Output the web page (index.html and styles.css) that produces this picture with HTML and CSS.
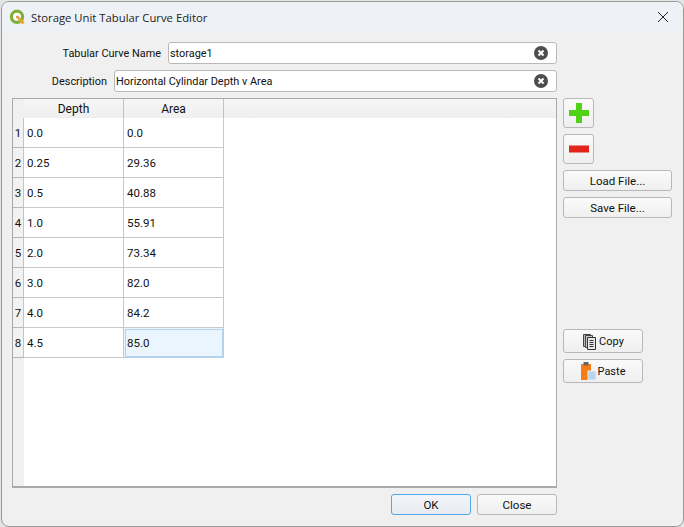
FILE: index.html
```html
<!DOCTYPE html>
<html lang="en">
<head>
  <meta charset="UTF-8">
  <title>Storage Unit Tabular Curve Editor</title>
  <link rel="stylesheet" href="styles.css">
</head>
<body>
  <div class="window">
    <div class="titlebar">
      <svg class="app-icon" width="17" height="17" viewBox="0 0 17 17">
        <circle cx="8" cy="7.800" r="5.600" fill="#fff" stroke="#7fae3c" stroke-width="3.200"/>
        <circle cx="8.500" cy="8" r="1.500" fill="#ec8a3c"/>
        <path d="M9.500 9l5 5.500" stroke="#e9a62c" stroke-width="3"/>
      </svg>
      <span class="title">Storage Unit Tabular Curve Editor</span>
      <svg class="close-x" width="12" height="12" viewBox="0 0 12 12">
        <path d="M1 1l10 10M11 1L1 11" stroke="#222" stroke-width="1" fill="none"/>
      </svg>
    </div>
    <div class="content">
      <div class="main">
        <div class="form-row name-row">
          <label>Tabular Curve Name</label>
          <div class="field"><span>storage1</span>
            <svg class="clear" width="14" height="14" viewBox="0 0 14 14"><circle cx="7" cy="7" r="7" fill="#4d4d4d"/><path d="M4.500 4.500l5 5M9.500 4.500l-5 5" stroke="#fff" stroke-width="2"/></svg>
          </div>
        </div>
        <div class="form-row desc-row">
          <label>Description</label>
          <div class="field"><span>Horizontal Cylindar Depth v Area</span>
            <svg class="clear" width="14" height="14" viewBox="0 0 14 14"><circle cx="7" cy="7" r="7" fill="#4d4d4d"/><path d="M4.500 4.500l5 5M9.500 4.500l-5 5" stroke="#fff" stroke-width="2"/></svg>
          </div>
        </div>
        <div class="table-box">
          <div class="row-heads">
            <div class="corner"></div>
            <div class="row-head">1</div>
            <div class="row-head">2</div>
            <div class="row-head">3</div>
            <div class="row-head">4</div>
            <div class="row-head">5</div>
            <div class="row-head">6</div>
            <div class="row-head">7</div>
            <div class="row-head">8</div>
          </div>
          <div class="table-body">
            <div class="col-heads">
              <div class="col-head">Depth</div>
              <div class="col-head">Area</div>
            </div>
            <div class="cells">
              <div class="cell">0.0</div><div class="cell">0.0</div>
              <div class="cell">0.25</div><div class="cell">29.36</div>
              <div class="cell">0.5</div><div class="cell">40.88</div>
              <div class="cell">1.0</div><div class="cell">55.91</div>
              <div class="cell">2.0</div><div class="cell">73.34</div>
              <div class="cell">3.0</div><div class="cell">82.0</div>
              <div class="cell">4.0</div><div class="cell">84.2</div>
              <div class="cell">4.5</div><div class="cell selected">85.0</div>
            </div>
          </div>
        </div>
        <div class="footer">
          <button class="btn dlg default">OK</button>
          <button class="btn dlg">Close</button>
        </div>
      </div>
      <div class="side">
        <button class="btn square">
          <svg width="20" height="20" viewBox="0 0 20 20"><path d="M7 0h6v7h7v6h-7v7H7v-7H0V7h7z" fill="#4fd314"/></svg>
        </button>
        <button class="btn square">
          <svg width="20" height="8" viewBox="0 0 20 8"><rect width="20" height="7" y="0.500" fill="#e3241c"/></svg>
        </button>
        <button class="btn wide">Load File...</button>
        <button class="btn wide">Save File...</button>
        <div class="spacer"></div>
        <button class="btn small">
          <svg width="16" height="17" viewBox="0 0 16 17"><path d="M1.500 1.500h7v12h-7z" fill="#bbb" stroke="#444"/><path d="M3.500 2.500h7v12h-7z" fill="#ccc" stroke="#444"/><path d="M5.500 4.500h8v12h-8z" fill="#e8e8e8" stroke="#333"/><path d="M7.500 7.500h4M7.500 9.500h4M7.500 11.500h4M7.500 13.500h4" stroke="#333"/></svg>
          Copy
        </button>
        <button class="btn small">
          <svg width="16" height="19" viewBox="0 0 16 19"><rect x="0" y="2" width="10" height="16" fill="#f47d16"/><rect x="2.500" y="0" width="5" height="3.500" fill="#666"/><rect x="7" y="9" width="8" height="9" fill="#bcd4ea" stroke="#e6eef6"/></svg>
          Paste
        </button>
      </div>
    </div>
  </div>
</body>
</html>
```

FILE: styles.css
```css
* {
  box-sizing: border-box;
}

body {
  margin: 0;
  width: 684px;
  height: 527px;
  overflow: hidden;
  background-color: #e4e4e4;
  font-family: 'Roboto', sans-serif;
  font-size: 11.5px;
  color: #111;
}

.window {
  width: 683px;
  height: 526px;
  margin-left: 1px;
  margin-top: 1px;
  border-radius: 8px;
  border: 1px solid #9a9a9a;
  overflow: hidden;
  display: flex;
  flex-direction: column;
  background-color: #f0f0f0;
}

.titlebar {
  height: 30px;
  flex: none;
  display: flex;
  align-items: center;
  padding: 0 14px 0 7px;
  background-color: #eef2f7;
}

.app-icon {
  margin-right: 5px;
}

.title {
  flex: 1;
  font-family: 'Open Sans', sans-serif;
  font-size: 11.3px;
  color: #222;
}

.content {
  flex: 1;
  display: flex;
  padding: 10px 10px 11px 10px;
  gap: 6px;
}

.main {
  width: 545px;
  display: flex;
  flex-direction: column;
}

.form-row {
  height: 22px;
  display: flex;
  align-items: center;
  margin-bottom: 6px;
  font-size: 10.9px;
}

.form-row label {
  text-align: right;
  margin-right: 7px;
}

.name-row label {
  width: 149px;
}

.desc-row label {
  width: 95px;
}

.field {
  flex: 1;
  height: 22px;
  display: flex;
  align-items: center;
  justify-content: space-between;
  padding: 0 8px 0 1px;
  background-color: #fff;
  border: 1px solid #b9b9b9;
  border-radius: 3px;
}

.table-box {
  height: 390px;
  display: flex;
  background-color: #fff;
  border: 1px solid #a9a9a9;
  border-bottom-width: 2px;
}

.row-heads {
  width: 11px;
  flex: none;
  background-color: #f0f0f0;
}

.corner {
  height: 19px;
}

.row-head {
  height: 30px;
  display: flex;
  align-items: center;
  justify-content: center;
  border-bottom: 1px solid #b5b5b5;
  border-right: 1px solid #c4c4c4;
  background-color: #f2f2f2;
}

.table-body {
  flex: 1;
}

.col-heads {
  height: 19px;
  display: flex;
  background: linear-gradient(#f6f6f6, #efefef);
}

.col-head {
  width: 100px;
  height: 19px;
  display: flex;
  align-items: center;
  justify-content: center;
  font-size: 12px;
  border-right: 1px solid #c4c4c4;
}

.cells {
  width: 200px;
  display: grid;
  grid-template-columns: 100px 100px;
  grid-auto-rows: 30px;
}

.cell {
  display: flex;
  align-items: center;
  padding-left: 3px;
  border-right: 1px solid #c8c8c8;
  border-bottom: 1px solid #c8c8c8;
}

.cell.selected {
  background-color: #ebf5fd;
  outline: 1px solid #b4d2ec;
  outline-offset: -2px;
  border-color: #b4d2ec;
}

.footer {
  flex: 1;
  display: flex;
  justify-content: flex-end;
  align-items: flex-end;
  gap: 6px;
}

.btn {
  font-family: inherit;
  font-size: inherit;
  color: inherit;
  padding: 0;
  display: flex;
  align-items: center;
  justify-content: center;
  background: linear-gradient(#fafafa, #efefef);
  border: 1px solid #b8b8b8;
  border-radius: 3px;
}

.btn.dlg {
  width: 80px;
  height: 21px;
}

.btn.default {
  border-color: #4fa8e8;
  background: linear-gradient(#f2f6fa, #e8ecf2);
}

.side {
  width: 109px;
  display: flex;
  flex-direction: column;
  align-items: flex-start;
  padding-top: 56px;
}

.btn.square {
  width: 31px;
  height: 30px;
  margin-bottom: 6px;
}

.btn.wide {
  width: 109px;
  height: 21px;
  margin-bottom: 6px;
}

.spacer {
  height: 105px;
}

.btn.small {
  width: 80px;
  height: 24px;
  margin-bottom: 6px;
  gap: 1px;
  font-size: 11px;
}
```
